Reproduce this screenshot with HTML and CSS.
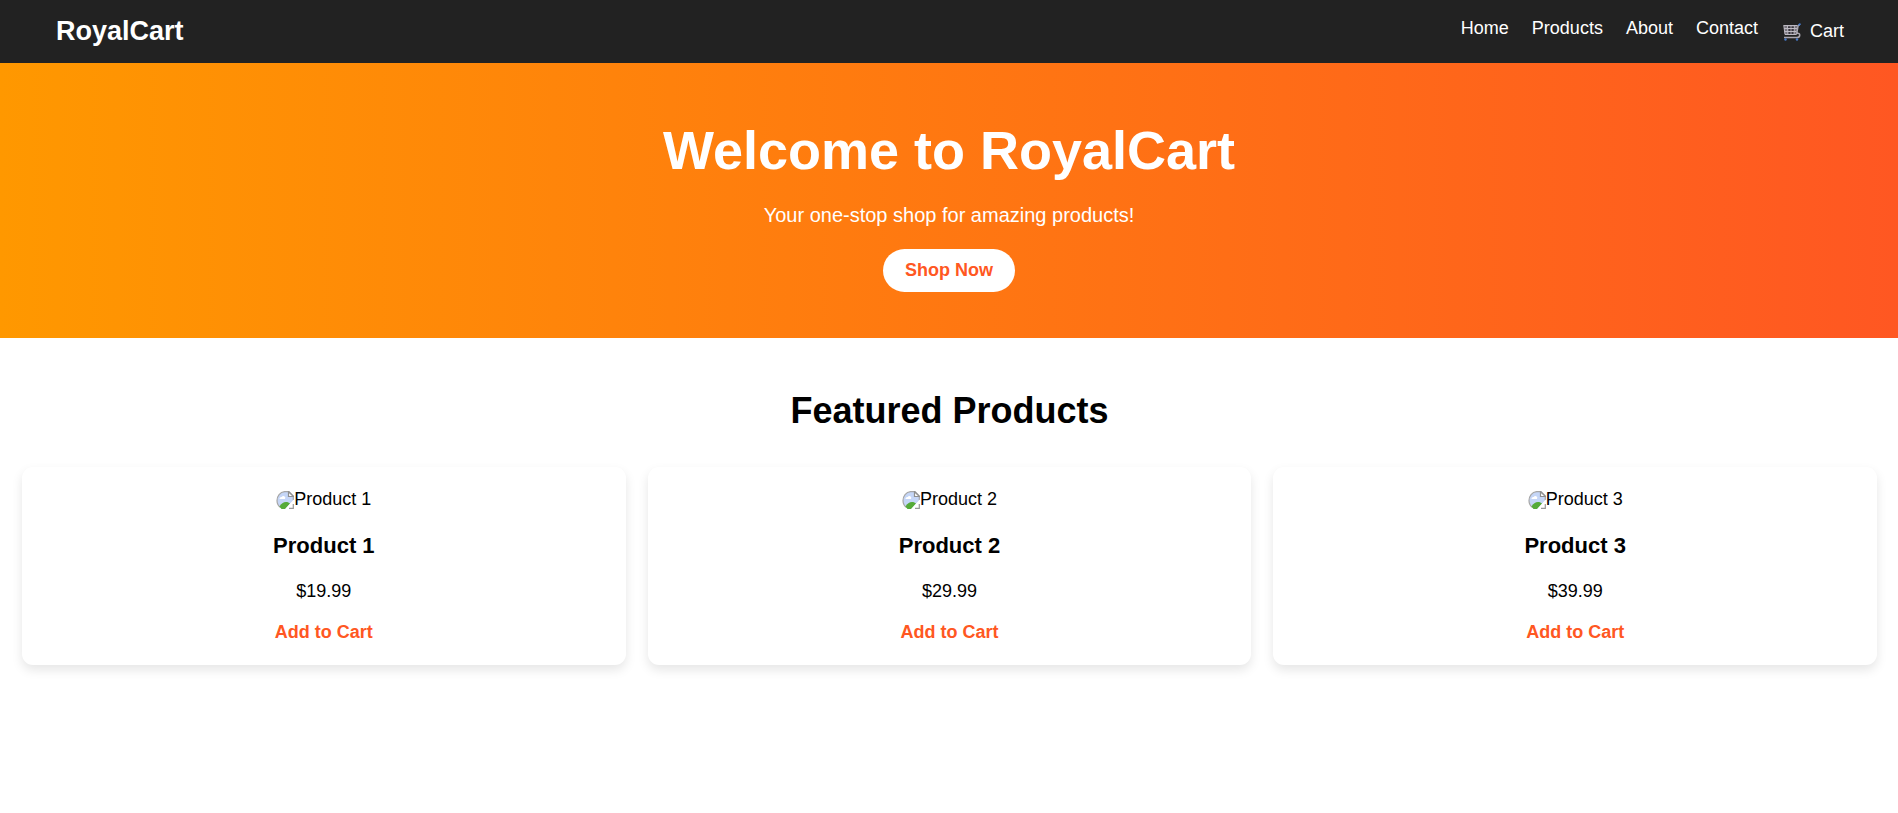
FILE: index.html
```html
<!DOCTYPE html>
<html lang="en">
<head>
<meta charset="utf-8">
<meta name="viewport" content="width=device-width, initial-scale=1">
<title>RoyalCart</title>
<link rel="stylesheet" href="styles.css">
</head>
<body>
<svg class="defs" width="0" height="0" aria-hidden="true">
  <symbol id="missing" viewBox="0 0 18 18">
    <path d="M9 .5h4.500L17.500 5v4L9 18H6C3 16 1 13 1 9.500S4 1 9 .5z" fill="#c5d6f7"/>
    <path d="M4.500 16.500C2.500 15 1 12.500 1 9.500 1 5 4 1 8.500.7H13L17.300 5v4" fill="none" stroke="#a6a6a6" stroke-width="1.200"/>
    <path d="M12.500.7V5.500h5z" fill="#fff" stroke="#8f8f8f" stroke-width="1.200"/>
    <path d="M3.500 8a1.800 1.800 0 0 1 2.200-2 1.900 1.900 0 0 1 3.300 2z" fill="#fff"/>
    <path d="M3.500 15.500c1.500-3 4-4.500 6.500-4.500 1.800 0 3 .6 4 1.500L9 18H5.500z" fill="#56ab39"/>
    <path d="M9 18.500 18 8.500v3.500l-5.500 6.500z" fill="#fff"/>
    <path d="M13 17.400h4.300V13" fill="none" stroke="#999" stroke-width="1.200"/>
  </symbol>
</svg>
<header class="navbar">
  <a class="logo" href="#home">RoyalCart</a>
  <nav>
    <ul class="links">
      <li><a href="#home">Home</a></li>
      <li><a href="#products">Products</a></li>
      <li><a href="#about">About</a></li>
      <li><a href="#contact">Contact</a></li>
      <li><a class="cart" href="#cart"><svg class="cart-icon" viewBox="0 0 18 18" aria-hidden="true">
        <path d="M1 2.500h13.500l-1 9H2z" fill="#77747c"/>
        <path d="M.5 2.500h14M1 5.500h13M1.500 8.500h12M2 11.500h11.500M.8 2.500l1.200 9M4.500 2.500l.5 9M8 2.500v9M11.300 2.500l-.4 9" fill="none" stroke="#bdb9c2" stroke-width="1"/>
        <path d="M5 3.500h2.500V5H5zM8.500 3.500h2.300V5H8.500zM5.500 6h2v2h-2zM8.500 6h2.200v2H8.500zM5.500 9h2v2h-2zM8.500 9h2v2h-2z" fill="#3a373f"/>
        <path d="M16.500 1.800 15 3l-1.300 7.500c2-.5 3.300.3 3 2s-1.500 2-2.700 2H1" fill="none" stroke="#aaa6b0" stroke-width="1.500"/>
        <path d="M15.500 2.200 17.500.8" stroke="#4679c8" stroke-width="1.800"/>
        <circle cx="2.500" cy="16.500" r="1.200" fill="#4679c8"/>
        <circle cx="14" cy="16.500" r="1.200" fill="#4679c8"/>
      </svg>Cart</a></li>
    </ul>
  </nav>
</header>
<main>
  <section class="hero" id="home">
    <h1>Welcome to RoyalCart</h1>
    <p>Your one-stop shop for amazing products!</p>
    <a class="shop" href="#products">Shop Now</a>
  </section>
  <section class="featured" id="products">
    <h2>Featured Products</h2>
    <div class="grid">
      <article class="card">
        <div class="picture"><svg class="missing" aria-hidden="true"><use href="#missing"/></svg>Product 1</div>
        <h3>Product 1</h3>
        <p>$19.99</p>
        <button type="button">Add to Cart</button>
      </article>
      <article class="card">
        <div class="picture"><svg class="missing" aria-hidden="true"><use href="#missing"/></svg>Product 2</div>
        <h3>Product 2</h3>
        <p>$29.99</p>
        <button type="button">Add to Cart</button>
      </article>
      <article class="card">
        <div class="picture"><svg class="missing" aria-hidden="true"><use href="#missing"/></svg>Product 3</div>
        <h3>Product 3</h3>
        <p>$39.99</p>
        <button type="button">Add to Cart</button>
      </article>
    </div>
  </section>
</main>
</body>
</html>
```

FILE: styles.css
```css
* {
  box-sizing: border-box;
  margin: 0;
  padding: 0;
}

body {
  background: #fff;
  color: #000;
  font-family: "Liberation Sans", Arial, sans-serif;
  font-size: 18px;
  line-height: 21px;
}

a {
  color: inherit;
  text-decoration: none;
}

.defs {
  display: block;
}

.navbar {
  display: flex;
  justify-content: space-between;
  align-items: center;
  padding: 16px 54px 16px 56px;
  background: #222;
  color: #fff;
}

.logo {
  font-size: 27px;
  font-weight: bold;
  line-height: 31px;
}

.links {
  display: flex;
  align-items: flex-start;
  gap: 23px;
  list-style: none;
}

.cart {
  display: flex;
  align-items: center;
  gap: 9px;
  padding-left: 2px;
  line-height: 27px;
}

.cart-icon {
  width: 18px;
  height: 18px;
}

.hero {
  display: flex;
  flex-direction: column;
  align-items: center;
  gap: 22px;
  padding: 56px 22px 46px;
  background: linear-gradient(to right, #ff9800, #ff5722);
  color: #fff;
  text-align: center;
}

.hero h1 {
  font-size: 54px;
  line-height: 62px;
}

.hero p {
  font-size: 20px;
  line-height: 24px;
}

.shop {
  padding: 11px 22px;
  border-radius: 22px;
  background: #fff;
  color: #ff5722;
  font-weight: bold;
}

.featured {
  padding: 52px 21px 45px 22px;
  text-align: center;
}

.featured h2 {
  margin-bottom: 36px;
  font-size: 36px;
  line-height: 41px;
}

.grid {
  display: grid;
  grid-template-columns: repeat(auto-fit, minmax(280px, 1fr));
  gap: 22px;
}

.card {
  display: flex;
  flex-direction: column;
  align-items: center;
  padding: 22px;
  border-radius: 11px;
  background: #fff;
  box-shadow: 0 5px 11px rgba(0, 0, 0, 0.1);
}

.picture {
  display: flex;
  align-items: center;
}

.missing {
  width: 18px;
  height: 18px;
}

.card h3 {
  margin: 22px 0;
  font-size: 22px;
  line-height: 27px;
}

.card button {
  margin-top: 20px;
  border: 0;
  background: none;
  color: #ff5722;
  font: inherit;
  font-weight: bold;
  cursor: pointer;
}
```
